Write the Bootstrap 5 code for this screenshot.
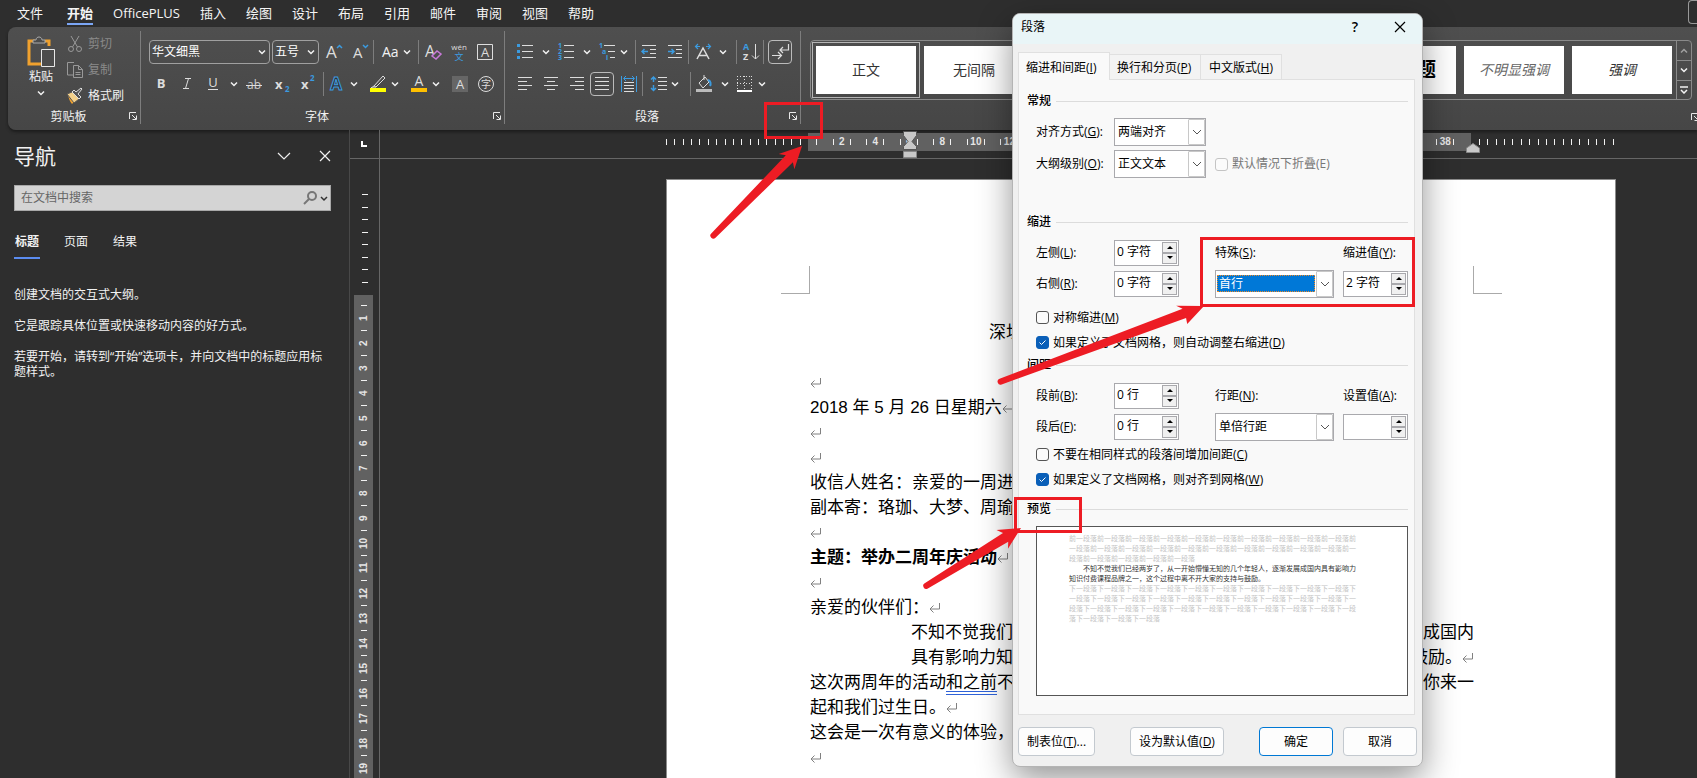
<!DOCTYPE html>
<html lang="zh-CN">
<head>
<meta charset="utf-8">
<meta name="viewport" content="width=device-width, initial-scale=1">
<title>段落设置</title>
<link href="https://cdn.jsdelivr.net/npm/bootstrap@5.3.0/dist/css/bootstrap.min.css" rel="stylesheet">
<style>
  :root { --dark:#2e2e2e; --line:#666; --blue:#3b9be0; }
  body { font-family:"Open Sans","Noto Sans CJK SC",sans-serif; font-size:12px; line-height:16px; background:var(--dark); color:#f2f2f2; }
  button { font-family:inherit; color:inherit; }
  svg { display:block; flex:none; }
  svg text { font-family:"Open Sans","Noto Sans CJK SC",sans-serif; }
  .bare { background:none; border:0; padding:0; }
  .app { height:100vh; }

  /* menu tabs */
  .menu-tabs { height:28px; gap:20px; padding-left:17px; font-size:13px; line-height:18px; }
  .menu-tabs a { color:#f5f5f5; text-decoration:none; padding:4px 0 1px; border-bottom:2px solid transparent; white-space:nowrap; }
  .menu-tabs a:first-child { margin-right:4px; }
  .menu-tabs a.active { font-weight:700; border-color:#7ba6f5; }
  .edge-btn { width:9px; height:24px; border:1px solid #999; border-right:0; border-radius:4px 0 0 4px; }

  /* ribbon */
  .ribbon { margin-left:8px; height:103px; background:linear-gradient(#4f4f4f,#464646); border-radius:8px 0 0 8px; box-shadow:0 2px 3px #1c1c1c; flex:none; }
  .grp { padding-top:13px; position:relative; }
  .grp.ruled { border-right:1px solid transparent; border-image:linear-gradient(transparent 5px,#7d7d7d 5px,#7d7d7d 96px,transparent 96px) 1; }
  .grp-clip { width:133px; padding-top:4px; }
  .grp-font { width:364px; }
  .grp-para { width:296px; }
  .grp-foot { height:20px; margin-bottom:1px; }
  .launcher { width:8px; height:8px; margin-right:3px; margin-top:3px; }
  .tools { height:24px; margin-bottom:8px; padding-left:7px; }
  .tools > * { flex:none; }
  .tool { width:26px; height:24px; }
  .tool.wide { width:41px; }
  .tool.aa { width:43px; }
  .tool.case { width:44px; font-size:14px; }
  .tool.on svg { outline:1px solid #bbb; outline-offset:-1px; border-radius:4px; }
  .vr-line { width:1px; height:24px; background:#7d7d7d; }
  .dark-select { height:24px; border:1px solid #a0a0a0; border-radius:4px; padding-right:3px; margin-right:2px; }
  .dark-select select { appearance:none; background:none; border:0; color:#fff; font:inherit; padding:0 0 0 2px; min-width:0; }
  .clip-row { height:26px; gap:4px; }
  .faded { color:#8a8a8a; }
  .gallery { border:1px solid #8a8a8a; border-radius:4px; height:60px; margin-right:5px; }
  .tile-frame { border:1px solid transparent; padding:3px; margin:1px 0 0 1px; width:108px; height:56px; }
  .tile-frame + .tile-frame { margin-left:0; }
  .tile-frame.active { border-color:#b5b5b5; }
  .tile { background:#fff; color:#333; width:100px; height:48px; font-size:14px; }
  .gal-scroll { width:15px; border-left:1px solid #8a8a8a; }
  .gal-scroll button + button { border-top:1px solid #8a8a8a; }

  /* navigation pane */
  .nav-pane { width:350px; border-right:1px solid #484848; padding:14px 18px 0 14px; flex:none; }
  .nav-pane h1 { font-size:21px; line-height:24px; font-weight:400; margin:0; }
  .search { height:26px; background:#d4d4d4; border:1px solid #a8a8a8; margin-top:17px; padding-left:6px; }
  .search input { background:none; border:0; outline:0; font-size:12px; padding:0; color:#444; }
  .search input::placeholder { color:#666; opacity:1; }
  .pane-tabs { gap:23px; margin-top:23px; }
  .pane-tabs a { color:#f2f2f2; text-decoration:none; padding:0 1px 7px; border-bottom:2px solid transparent; }
  .pane-tabs a.active { font-weight:700; border-color:#5b8cf0; }
  .pane-text { margin-top:28px; line-height:15px; }
  .pane-text p { margin:0 0 16px; }

  /* rulers */
  .v-ruler { width:30px; border-right:1px solid var(--line); flex:none; }
  .corner { height:29px; border-bottom:1px solid var(--line); padding:11px 0 0 11px; }
  .v-out { height:25px; }
  .v-out i, .v-cell i { width:6px; height:1px; background:#f2f2f2; }
  .v-outs { padding-top:29px; }
  .v-band { background:#616161; width:19px; margin:7px auto 0 4px; padding-top:10px; }
  .v-cell { height:25px; }
  .v-cell b { writing-mode:vertical-rl; transform:rotate(180deg); height:24px; text-align:center; font-size:10px; line-height:12px; color:#e6e6e6; font-family:"Liberation Sans",sans-serif; }
  .h-ruler { height:29px; border-bottom:1px solid var(--line); padding:3px 0 0 286px; }
  .h-ruler > div { height:18px; flex:none; }
  .h-out { width:142px; }
  .h-out i, .h-num i, .h-first i { width:1px; height:6px; background:#f2f2f2; display:block; }
  .h-out span { flex:1 1 0; }
  .h-band { width:663px; background:#616161; position:relative; padding-right:9px; }
  .h-first { width:17px; padding-left:8px; }
  .h-num { flex:1 1 0; min-width:0; }
  .h-num div { width:18px; font:700 10px/12px "Liberation Sans",sans-serif; color:#e6e6e6; }
  .mark-left { position:absolute; left:95px; top:-2px; }
  .mark-right { position:absolute; right:-9px; top:10px; }

  /* document */
  .doc-area { padding:20px 0 0 286px; overflow:hidden; }
  .sheet { width:950px; height:100%; background:#fff; border:1px solid #8c8c8c; border-bottom:0; color:#000; padding:86px 113px 0 114px; font:17px/25px "Liberation Sans","Noto Sans CJK SC",sans-serif; flex:none; }
  .crop { width:29px; height:28px; border-bottom:1px solid #aaa; }
  .crop.l { border-right:1px solid #aaa; }
  .crop.r { border-left:1px solid #aaa; }
  .letter { padding:26px 28px 0 29px; }
  .ln { height:25px; white-space:nowrap; display:flex; align-items:center; }
  .ln.ind { padding-left:101px; }
  .gram { text-decoration:underline double #2f62d8; text-underline-offset:3px; }

  /* dialog */
  .dlg { position:absolute; left:1012px; top:13px; width:411px; height:754px; background:#f0f0f0; color:#000; border:1px solid #b4b4b4; border-radius:8px; box-shadow:0 12px 34px rgba(0,0,0,.42); overflow:hidden; padding:0; }
  .dlg-head { height:30px; background:#e9f5f7; padding:0 16px 4px 8px; }
  .dlg-tabs { padding:8px 0 0 5px; }
  .dlg-tabs button { height:25px; background:#f3f3f3; border:1px solid #e0e0e0; border-left:0; border-bottom:0; padding:2px 7px 0; width:91px; white-space:nowrap; text-align:left; }
  .dlg-tabs button.active { height:28px; width:92px; background:#f9f9f9; border-left:1px solid #e0e0e0; position:relative; margin-bottom:-1px; }
  .dlg-tabs button:last-child { width:81px; padding-left:8px; }
  .panel { background:#f9f9f9; border:1px solid #e0e0e0; margin:0 7px 0 5px; height:636px; padding:13px 6px 0 8px; }
  .sect { height:16px; margin:0 0 7px; font-size:12px; line-height:16px; gap:5px; }
  .sect::after { content:""; flex:1; height:1px; background:#dcdcdc; }
  .sect span { white-space:nowrap; }
  .rows { margin-left:9px; }
  .f-row { display:grid; grid-template-columns:78px 101px 1fr 65px; align-items:center; height:31px; }
  .f-row.gen { grid-template-columns:78px 101px 1fr; height:32px; }
  .c-row { height:25px; gap:4px; }
  .c-row.gray { color:#777; height:32px; }
  .c-row input { appearance:none; width:13px; height:13px; border:1px solid #555; border-radius:3px; margin:0; background:#fbfbfb; flex:none; }
  .c-row input:disabled { border-color:#c4c4c4; }
  .c-row input:checked { border-color:#0a5fb8; background:#0a5fb8 url("data:image/svg+xml,%3Csvg xmlns='http://www.w3.org/2000/svg' viewBox='0 0 11 11'%3E%3Cpath d='M2.5 5.5l2 2 4-4' fill='none' stroke='white'/%3E%3C/svg%3E"); }
  .pick { height:28px; width:92px; border:1px solid #a9a9ad; background:#fff; padding-left:1px; }
  .pick.long { width:119px; }
  .pick select { appearance:none; border:1px solid transparent; background:none; color:#000; font:inherit; line-height:14px; height:17px; padding:0 1px; min-width:0; flex:1; border-radius:0; }
  .pick.focus select { background:#0078d7; color:#fff; border:1px dotted #f08a24; }
  .pick .drop { width:17px; height:26px; border:1px solid #c8c8c8; border-radius:1px; margin-left:1px; }
  .spin { height:26px; width:65px; border:1px solid #a9a9ad; background:#fff; padding:1px; }
  .spin input { border:0; outline:0; background:none; font-size:12px; padding:0 0 2px 1px; min-width:0; flex:1; color:#000; }
  .spin button { width:15px; height:11px; border:1px solid #a9a9ad; background:#f0f0f0; padding:0; }
  .preview { background:#fff; border:1px solid #555; height:170px; margin-top:9px; padding:7px 0 0 32px; color:#c4c4c4; font-size:7px; line-height:10px; }
  .preview p { width:289px; margin:0; word-break:break-all; }
  .preview p.cur { color:#333; text-indent:14px; }
  .dlg-foot { padding:12px 0 0 5px; }
  .dlg-foot button { height:29px; background:#fdfdfd; border:1px solid #c3c9cf; border-radius:4px; padding:0; flex:none; }
  .w-s { width:74px; } .w-m { width:77px; } .w-l { width:94px; margin:0 35px; }
  .dlg-foot button.ok { border-color:#0078d4; margin-right:10px; }

  .notes { position:absolute; left:0; top:0; pointer-events:none; }
</style>
</head>
<body class="overflow-hidden">
<svg width="0" height="0" class="position-absolute" aria-hidden="true">
  <symbol id="cv" viewBox="0 0 8 8"><path d="M1 2.5l3 3 3-3" fill="none" stroke="#f2f2f2" stroke-width="1.5"/></symbol>
  <symbol id="dcv" viewBox="0 0 10 10"><path d="M1 3l4 4 4-4" fill="none" stroke="#555"/></symbol>
  <symbol id="lch" viewBox="0 0 8 8"><path d="M.5 7V.5H7M3 3l4 4M7.5 3.5v4h-4" fill="none" stroke="#e8e8e8"/></symbol>
  <symbol id="ret" viewBox="0 0 12 12"><path d="M10.500 1v6H1.500M4.500 3.500L1 7l3.500 3.500" fill="none" stroke="#808080"/></symbol>
  <symbol id="up" viewBox="0 0 6 4"><path d="M0 4L3 1l3 3z"/></symbol>
  <symbol id="dn" viewBox="0 0 6 4"><path d="M0 0l3 3 3-3z"/></symbol>
  <symbol id="x" viewBox="0 0 12 12"><path d="M1 1l10 10M11 1L1 11" fill="none" stroke="currentColor" stroke-width="1.200"/></symbol>
</svg>

<div class="app d-flex flex-column">
  <nav class="menu-tabs d-flex align-items-start">
    <a href="#">文件</a><a href="#" class="active">开始</a><a href="#">OfficePLUS</a><a href="#">插入</a><a href="#">绘图</a><a href="#">设计</a><a href="#">布局</a><a href="#">引用</a><a href="#">邮件</a><a href="#">审阅</a><a href="#">视图</a><a href="#">帮助</a>
    <button class="bare edge-btn ms-auto mt-0" aria-label="更多"></button>
  </nav>

  <div class="ribbon d-flex">
    <section class="grp grp-clip ruled d-flex flex-column flex-shrink-0">
      <div class="d-flex">
        <button class="bare d-flex flex-column align-items-center ms-2" style="width:50px">
          <svg class="mt-1" width="30" height="34" viewBox="0 0 30 34"><path d="M9 6H3v23h12M19 6h4v5" fill="none" stroke="#f0a12e" stroke-width="3"/><path d="M7 8V5h3c0-4 6-4 6 0h3v3z" fill="#4c4c4c" stroke="#aaa"/><path d="M15.500 14.500h13v17h-13z" fill="#4c4c4c" stroke="#e8e8e8"/></svg>
          <span>粘贴</span>
          <svg class="mt-1" width="8" height="8"><use href="#cv"/></svg>
        </button>
        <div>
          <button class="bare clip-row d-flex align-items-center faded"><svg width="18" height="18" viewBox="0 0 18 18" fill="none" stroke="#999"><path d="M5 1l6.500 11M13 1L6.500 12"/><circle cx="5" cy="14" r="2.500"/><circle cx="13" cy="14" r="2.500"/></svg>剪切</button>
          <button class="bare clip-row d-flex align-items-center faded"><svg width="18" height="18" viewBox="0 0 18 18" fill="none" stroke="#999"><path d="M7 14H1.500V1.500H8"/><path d="M7.500 4.500h5l4 4v8h-9zM12.500 4.500v4h4M9.500 11.500h5M9.500 13.500h5"/></svg>复制</button>
          <button class="bare clip-row d-flex align-items-center"><svg width="18" height="18" viewBox="0 0 18 18"><path d="M2 8l7 6-3 3C4 15 3 12 2 8z" fill="#f0a12e"/><path d="M1 7l5-2 7 7-5 4z" fill="#f3d08a" stroke="#555"/><path d="M6 5l7 7 2-2-3-3 4-5-1-1-5 4-2-2z" fill="#555" stroke="#ddd"/></svg>格式刷</button>
        </div>
      </div>
      <div class="grp-foot d-flex mt-auto"><span class="flex-fill text-center">剪贴板</span><button class="bare launcher" aria-label="剪贴板选项"><svg width="8" height="8"><use href="#lch"/></svg></button></div>
    </section>

    <section class="grp grp-font ruled d-flex flex-column flex-shrink-0">
      <div class="tools d-flex align-items-center ps-2">
        <div class="dark-select d-flex align-items-center" style="width:121px"><select class="flex-fill" aria-label="字体"><option>华文细黑</option></select><svg width="8" height="8"><use href="#cv"/></svg></div>
        <div class="dark-select d-flex align-items-center" style="width:47px"><select class="flex-fill" aria-label="字号"><option>五号</option></select><svg width="8" height="8"><use href="#cv"/></svg></div>
        <button class="bare tool"><svg width="26" height="24"><text x="5" y="18" font-size="17" fill="#ddd">A</text><path d="M16 8l2.500-2.500L21 8" fill="none" stroke="#3b9be0" stroke-width="1.500"/></svg></button>
        <button class="bare tool"><svg width="26" height="24"><text x="6" y="18" font-size="15" fill="#ddd">A</text><path d="M16 5l2.500 2.500L21 5" fill="none" stroke="#3b9be0" stroke-width="1.500"/></svg></button>
        <span class="vr-line"></span>
        <button class="bare tool case d-flex align-items-center gap-1 ps-2">Aa<svg width="8" height="8"><use href="#cv"/></svg></button>
        <span class="vr-line"></span>
        <button class="bare tool"><svg width="26" height="24"><text x="6" y="17" font-size="16" fill="#ddd">A</text><path d="M13 16l5-5 4 3-5 5z" fill="#4c4c4c" stroke="#c879d8" stroke-width="1.500"/></svg></button>
        <button class="bare tool"><svg width="26" height="24"><text x="14" y="10" font-size="8" fill="#ddd" text-anchor="middle">wén</text><text x="14" y="20" font-size="9" fill="#3b9be0" text-anchor="middle">文</text></svg></button>
        <button class="bare tool"><svg width="26" height="24"><path d="M6.500 4.500h15v15h-15z" fill="none" stroke="#ddd"/><text x="14" y="17" font-size="13" fill="#ddd" text-anchor="middle">A</text></svg></button>
      </div>
      <div class="tools d-flex align-items-center">
        <button class="bare tool"><svg width="26" height="24"><text x="13" y="16" font-size="13" font-weight="700" fill="#ddd" text-anchor="middle">B</text></svg></button>
        <button class="bare tool"><svg width="26" height="24"><path d="M11 6.500h6M9 16.500h6M14.500 6.500l-3 10" fill="none" stroke="#ddd"/></svg></button>
        <button class="bare tool wide d-flex align-items-center"><svg width="26" height="24"><text x="13" y="15" font-size="13" fill="#ddd" text-anchor="middle">U</text><path d="M8 17.500h10" stroke="#ddd"/></svg><svg width="8" height="8" class="ms-1"><use href="#cv"/></svg></button>
        <button class="bare tool me-1"><svg width="26" height="24"><text x="13" y="17" font-size="12" fill="#ccc" text-anchor="middle">ab</text><path d="M5 13.500h16" stroke="#ddd"/></svg></button>
        <button class="bare tool"><svg width="26" height="24"><text x="4" y="17" font-size="13" font-weight="700" fill="#ddd">x</text><text x="14" y="20" font-size="8" font-weight="700" fill="#3b9be0">2</text></svg></button>
        <button class="bare tool"><svg width="26" height="24"><text x="4" y="17" font-size="13" font-weight="700" fill="#ddd">x</text><text x="13" y="9" font-size="8" font-weight="700" fill="#3b9be0">2</text></svg></button>
        <span class="vr-line"></span>
        <button class="bare tool wide d-flex align-items-center"><svg width="26" height="24"><text x="12" y="18" font-size="17" font-weight="700" fill="#333" stroke="#3b9be0" text-anchor="middle">A</text></svg><svg width="8" height="8"><use href="#cv"/></svg></button>
        <button class="bare tool wide d-flex align-items-center"><svg width="26" height="24"><path d="M9 14l9-10 2 2-9 9zM9 14l-3 2h5" fill="none" stroke="#ddd"/><path d="M5 16h16v4H5z" fill="#ff0"/></svg><svg width="8" height="8"><use href="#cv"/></svg></button>
        <button class="bare tool wide d-flex align-items-center"><svg width="26" height="24"><text x="13" y="14" font-size="14" fill="#ddd" text-anchor="middle">A</text><path d="M5 16h16v4H5z" fill="#ffc000"/></svg><svg width="8" height="8"><use href="#cv"/></svg></button>
        <button class="bare tool"><svg width="26" height="24"><path d="M5 4h16v16H5z" fill="#666"/><text x="13" y="17" font-size="13" fill="#ddd" text-anchor="middle">A</text></svg></button>
        <button class="bare tool"><svg width="26" height="24"><circle cx="13" cy="12" r="7.500" fill="none" stroke="#ddd"/><text x="13" y="16" font-size="10" fill="#ddd" text-anchor="middle">字</text></svg></button>
      </div>
      <div class="grp-foot d-flex mt-auto"><span class="flex-fill text-center">字体</span><button class="bare launcher" aria-label="字体选项"><svg width="8" height="8"><use href="#lch"/></svg></button></div>
    </section>

    <section class="grp grp-para ruled d-flex flex-column flex-shrink-0">
      <div class="tools d-flex align-items-center">
        <button class="bare tool wide d-flex align-items-center"><svg width="26" height="24"><path d="M5 4h3v3H5zM5 10h3v3H5zM5 16h3v3H5z" fill="#3b9be0"/><path d="M10 5.500h11M10 11.500h11M10 17.500h11" stroke="#ddd"/></svg><svg width="8" height="8" class="ms-1"><use href="#cv"/></svg></button>
        <button class="bare tool wide d-flex align-items-center"><svg width="26" height="24"><g font-size="7" font-weight="700" fill="#3b9be0"><text x="5" y="8">1</text><text x="5" y="14">2</text><text x="5" y="20">3</text></g><path d="M11 5.500h10M11 11.500h10M11 17.500h10" stroke="#ddd"/></svg><svg width="8" height="8" class="ms-1"><use href="#cv"/></svg></button>
        <button class="bare tool wide d-flex align-items-center"><svg width="26" height="24"><g font-size="7" font-weight="700" fill="#3b9be0"><text x="5" y="8">1</text><text x="8" y="14">a</text><text x="12" y="20">i</text></g><path d="M10 5.500h11M14 11.500h7M16 17.500h5" stroke="#ddd"/></svg><svg width="8" height="8"><use href="#cv"/></svg></button>
        <span class="vr-line"></span>
        <button class="bare tool"><svg width="26" height="24"><path d="M6 5.500h14M14 9.500h6M14 13.500h6M6 17.500h14" stroke="#ddd"/><path d="M12 11.500H6M8.500 9L6 11.500 8.500 14" fill="none" stroke="#3b9be0" stroke-width="1.500"/></svg></button>
        <button class="bare tool"><svg width="26" height="24"><path d="M6 5.500h14M14 9.500h6M14 13.500h6M6 17.500h14" stroke="#ddd"/><path d="M6 11.500h6M9.500 9l2.500 2.500L9.500 14" fill="none" stroke="#3b9be0" stroke-width="1.500"/></svg></button>
        <span class="vr-line"></span>
        <button class="bare tool aa d-flex align-items-center"><svg width="26" height="24"><path d="M8 19l6-11 6 11M10 15.500h8" fill="none" stroke="#ddd" stroke-width="1.500"/><path d="M11 6.500H7M9 4L6.500 6.500 9 9M17 6.500h4M19 4l2.500 2.500L19 9" fill="none" stroke="#3b9be0" stroke-width="1.200"/></svg><svg width="8" height="8" class="ms-1"><use href="#cv"/></svg></button>
        <span class="vr-line ms-1"></span>
        <button class="bare tool"><svg width="26" height="24"><g font-size="9" font-weight="700"><text x="6" y="10" fill="#3b9be0">A</text><text x="6" y="20" fill="#ddd">Z</text></g><path d="M18.500 4v15M15 15.500l3.500 3.500 3.500-3.500" fill="none" stroke="#ddd"/></svg></button>
        <span class="vr-line me-1"></span>
        <button class="bare tool on"><svg width="24" height="24"><path d="M20.500 4v6H12M15 7l-3 3 3 3M4 15.500h9M10 12l3.500 3.500L10 19" fill="none" stroke="#ddd" stroke-width="1.200"/></svg></button>
      </div>
      <div class="tools d-flex align-items-center">
        <button class="bare tool"><svg width="26" height="24"><path d="M6 5.500h14M6 9.500h9M6 13.500h14M6 17.500h9" stroke="#ddd"/></svg></button>
        <button class="bare tool"><svg width="26" height="24"><path d="M6 5.500h14M9 9.500h8M6 13.500h14M9 17.500h8" stroke="#ddd"/></svg></button>
        <button class="bare tool"><svg width="26" height="24"><path d="M6 5.500h14M11 9.500h9M6 13.500h14M11 17.500h9" stroke="#ddd"/></svg></button>
        <button class="bare tool on"><svg width="24" height="24"><path d="M5 5.500h14M5 9.500h14M5 13.500h14M5 17.500h14" stroke="#ddd"/></svg></button>
        <button class="bare tool"><svg width="26" height="24"><path d="M8 10.500h10M8 13.500h10M8 16.500h10M8 19.500h10" stroke="#ddd"/><path d="M5.500 4v16M20.500 4v16M8 6.500h10M10 4L7.500 6.500 10 9M16 4l2.500 2.500L16 9" fill="none" stroke="#3b9be0"/></svg></button>
        <span class="vr-line"></span>
        <button class="bare tool aa d-flex align-items-center ms-1"><svg width="24" height="24"><path d="M11 5.500h9M11 9.500h9M11 13.500h9M11 17.500h9" stroke="#ddd"/><path d="M6.500 5v5M4 7.500L6.500 5 9 7.500M6.500 13v6M4 16l2.500 2.500L9 16" fill="none" stroke="#3b9be0" stroke-width="1.500"/></svg><svg width="8" height="8"><use href="#cv"/></svg></button>
        <span class="vr-line"></span>
        <button class="bare tool wide d-flex align-items-center"><svg width="26" height="24"><path d="M8 11l6-6 4 5-6 6zM13 3v5" fill="none" stroke="#ddd"/><path d="M17 8c3 1 3 4 2 6" fill="none" stroke="#3b9be0" stroke-width="2"/><path d="M5 17h16v3H5z" fill="#bbb"/></svg><svg width="8" height="8" class="ms-1"><use href="#cv"/></svg></button>
        <button class="bare tool wide d-flex align-items-center"><svg width="26" height="24"><path d="M5.500 4v14M12.500 4v14M19.500 4v14M5 4.500h15M5 11.500h15" stroke="#ddd" stroke-dasharray="1 2"/><path d="M5 19h15" stroke="#fff" stroke-width="2"/></svg><svg width="8" height="8"><use href="#cv"/></svg></button>
      </div>
      <div class="grp-foot d-flex mt-auto"><span class="flex-fill text-center">段落</span><button class="bare launcher" aria-label="段落设置"><svg width="8" height="8"><use href="#lch"/></svg></button></div>
    </section>

    <section class="grp d-flex flex-column flex-fill overflow-hidden" style="padding-left:9px">
      <div class="gallery d-flex">
        <div class="d-flex flex-fill overflow-hidden">
          <div class="tile-frame active flex-shrink-0"><button class="bare tile">正文</button></div>
          <div class="tile-frame flex-shrink-0"><button class="bare tile">无间隔</button></div>
          <div class="tile-frame flex-shrink-0"><button class="bare tile">标题 1</button></div>
          <div class="tile-frame flex-shrink-0"><button class="bare tile">标题 2</button></div>
          <div class="tile-frame flex-shrink-0"><button class="bare tile">标题</button></div>
          <div class="tile-frame flex-shrink-0"><button class="bare tile fw-bold text-black" style="font-size:20px">副标题</button></div>
          <div class="tile-frame flex-shrink-0"><button class="bare tile fst-italic" style="color:#666">不明显强调</button></div>
          <div class="tile-frame flex-shrink-0"><button class="bare tile fst-italic">强调</button></div>
        </div>
        <div class="gal-scroll d-flex flex-column">
          <button class="bare flex-fill d-flex align-items-center justify-content-center opacity-50" aria-label="上移"><svg width="8" height="8" style="rotate:180deg"><use href="#cv"/></svg></button>
          <button class="bare flex-fill d-flex align-items-center justify-content-center" aria-label="下移"><svg width="8" height="8"><use href="#cv"/></svg></button>
          <button class="bare flex-fill d-flex align-items-center justify-content-center" aria-label="其他"><svg width="8" height="8" viewBox="0 0 8 8"><path d="M0 1h8M1 4l3 3 3-3" fill="none" stroke="#f2f2f2" stroke-width="1.500"/></svg></button>
        </div>
      </div>
      <div class="grp-foot d-flex mt-auto"><span class="flex-fill text-center">样式</span><button class="bare overflow-hidden mt-1" style="width:6px;height:8px" aria-label="样式选项"><svg width="8" height="8"><use href="#lch"/></svg></button></div>
    </section>
  </div>

  <div class="d-flex flex-fill overflow-hidden">
    <aside class="nav-pane">
      <div class="d-flex align-items-center">
        <h1 class="flex-fill">导航</h1>
        <button class="bare me-4" aria-label="选项"><svg width="14" height="14" viewBox="0 0 14 14"><path d="M1 4l6 6 6-6" fill="none" stroke="#eee" stroke-width="1.200"/></svg></button>
        <button class="bare ps-1" aria-label="关闭"><svg width="12" height="12"><use href="#x"/></svg></button>
      </div>
      <div class="search d-flex align-items-center">
        <input class="flex-fill" type="text" placeholder="在文档中搜索" aria-label="在文档中搜索">
        <svg width="16" height="16" viewBox="0 0 16 16" fill="none" stroke="#777" stroke-width="2"><circle cx="10" cy="6" r="4"/><path d="M7 9l-5 5"/></svg>
        <svg width="12" height="12" viewBox="0 0 12 12"><path d="M3 5l3 3 3-3" fill="none" stroke="#333" stroke-width="1.500"/></svg>
      </div>
      <nav class="pane-tabs d-flex"><a href="#" class="active">标题</a><a href="#">页面</a><a href="#">结果</a></nav>
      <div class="pane-text"><p>创建文档的交互式大纲。</p><p>它是跟踪具体位置或快速移动内容的好方式。</p><p>若要开始，请转到“开始”选项卡，并向文档中的标题应用标题样式。</p></div>
    </aside>

    <div class="v-ruler overflow-hidden">
      <div class="corner"><svg width="6" height="6"><path d="M1 0v5h5" fill="none" stroke="#fff" stroke-width="2"/></svg></div>
      <div class="v-outs" id="vOut"></div>
      <div class="v-band" id="vBand"></div>
    </div>

    <main class="flex-fill d-flex flex-column overflow-hidden">
      <div class="h-ruler d-flex flex-shrink-0">
        <div class="h-out d-flex align-items-center" data-ticks="17"></div>
        <div class="h-band d-flex align-items-center" id="hBand">
          <span class="h-first"><i></i></span>
          <svg class="mark-left" width="14" height="28" viewBox="0 0 14 28"><path d="M.5.500h13v4L9 10.500l4.500 5v3H.5v-3l4.500-5-4.500-6z" fill="#c8c8c8" stroke="#555"/><path d="M.5 20.500h13v6H.5z" fill="#c8c8c8" stroke="#888"/></svg>
          <svg class="mark-right" width="14" height="10" viewBox="0 0 14 10"><path d="M.5 9.500V5L7 .5 13.500 5v4.500z" fill="#c8c8c8" stroke="#888"/></svg>
        </div>
        <div class="h-out d-flex align-items-center ms-2" data-ticks="17"></div>
      </div>
      <div class="doc-area flex-fill">
        <article class="sheet overflow-hidden">
          <div class="d-flex justify-content-between"><span class="crop l"></span><span class="crop r"></span></div>
          <div class="letter">
            <div class="ln justify-content-center">深圳一周进步有限公司周年庆活动邀请函</div>
            <div class="ln"></div>
            <div class="ln"><svg width="12" height="12"><use href="#ret"/></svg></div>
            <div class="ln">2018 年 5 月 26 日星期六<svg width="12" height="12"><use href="#ret"/></svg></div>
            <div class="ln"><svg width="12" height="12"><use href="#ret"/></svg></div>
            <div class="ln"><svg width="12" height="12"><use href="#ret"/></svg></div>
            <div class="ln">收信人姓名：亲爱的一周进步</div>
            <div class="ln">副本寄：珞珈、大梦、周瑜</div>
            <div class="ln"><svg width="12" height="12"><use href="#ret"/></svg></div>
            <div class="ln fw-bold">主题：举办二周年庆活动<svg width="12" height="12"><use href="#ret"/></svg></div>
            <div class="ln"><svg width="12" height="12"><use href="#ret"/></svg></div>
            <div class="ln">亲爱的伙伴们：<svg width="12" height="12"><use href="#ret"/></svg></div>
            <div class="ln ind justify-content-between"><span>不知不觉我们已经两岁了，从一开始</span><span>逐渐发展成国内</span></div>
            <div class="ln ind justify-content-between"><span>具有影响力知识付费课程品牌之一，</span><span class="d-flex align-items-center">大家的支持与鼓励。<svg width="12" height="12"><use href="#ret"/></svg></span></div>
            <div class="ln justify-content-between"><span>这次两周年的活动<span class="gram">和之前</span>不一样</span><span>你来一</span></div>
            <div class="ln">起和我们过生日。<svg width="12" height="12"><use href="#ret"/></svg></div>
            <div class="ln">这会是一次有意义的体验，</div>
            <div class="ln"><svg width="12" height="12"><use href="#ret"/></svg></div>
            <div class="ln"><svg width="12" height="12"><use href="#ret"/></svg></div>
          </div>
        </article>
      </div>
    </main>
  </div>
</div>

<form class="dlg" role="dialog" aria-label="段落" onsubmit="return false">
  <div class="dlg-head d-flex align-items-center">
    <span class="flex-fill">段落</span>
    <button type="button" class="bare fw-semibold me-3 pe-3 text-center" style="font-size:14px" aria-label="帮助">?</button>
    <button type="button" class="bare ps-1" aria-label="关闭"><svg width="12" height="12"><use href="#x"/></svg></button>
  </div>
  <div class="dlg-tabs d-flex align-items-end">
    <button type="button" class="active">缩进和间距(<u>I</u>)</button><button type="button">换行和分页(<u>P</u>)</button><button type="button">中文版式(<u>H</u>)</button>
  </div>
  <div class="panel">
    <h2 class="sect d-flex align-items-center"><span>常规</span></h2>
    <div class="rows">
      <div class="f-row gen"><label for="al">对齐方式(<u>G</u>):</label><div class="pick d-flex align-items-center"><select id="al"><option>两端对齐</option></select><span class="drop d-flex align-items-center justify-content-center"><svg width="10" height="10"><use href="#dcv"/></svg></span></div></div>
      <div class="f-row gen"><label for="ol">大纲级别(<u>O</u>):</label><div class="pick d-flex align-items-center"><select id="ol"><option>正文文本</option></select><span class="drop d-flex align-items-center justify-content-center"><svg width="10" height="10"><use href="#dcv"/></svg></span></div><div class="c-row gray d-flex align-items-center"><input type="checkbox" id="fold" disabled><label for="fold">默认情况下折叠(E)</label></div></div>
    </div>
    <h2 class="sect d-flex align-items-center" style="margin-top:34px"><span>缩进</span></h2>
    <div class="rows">
      <div class="f-row"><label for="il">左侧(<u>L</u>):</label><div class="spin d-flex align-items-center" data-spin><input id="il" type="text" value="0 字符"></div><label for="sp">特殊(<u>S</u>):</label><label for="iv" class="text-nowrap">缩进值(<u>Y</u>):</label></div>
      <div class="f-row"><label for="ir">右侧(<u>R</u>):</label><div class="spin d-flex align-items-center" data-spin><input id="ir" type="text" value="0 字符"></div><div class="pick long focus d-flex align-items-center"><select id="sp"><option>首行</option></select><span class="drop d-flex align-items-center justify-content-center"><svg width="10" height="10"><use href="#dcv"/></svg></span></div><div class="spin d-flex align-items-center" data-spin><input id="iv" type="text" value="2 字符"></div></div>
      <div class="c-row d-flex align-items-center" style="margin-top:6px"><input type="checkbox" id="c1"><label for="c1">对称缩进(<u>M</u>)</label></div>
      <div class="c-row d-flex align-items-center"><input type="checkbox" id="c2" checked><label for="c2">如果定义了文档网格，则自动调整右缩进(<u>D</u>)</label></div>
    </div>
    <h2 class="sect d-flex align-items-center" style="margin-top:2px"><span>间距</span></h2>
    <div class="rows">
      <div class="f-row"><label for="sb">段前(<u>B</u>):</label><div class="spin d-flex align-items-center" data-spin><input id="sb" type="text" value="0 行"></div><label for="ls">行距(<u>N</u>):</label><label for="sv" class="text-nowrap">设置值(<u>A</u>):</label></div>
      <div class="f-row"><label for="sa">段后(<u>F</u>):</label><div class="spin d-flex align-items-center" data-spin><input id="sa" type="text" value="0 行"></div><div class="pick long d-flex align-items-center"><select id="ls"><option>单倍行距</option></select><span class="drop d-flex align-items-center justify-content-center"><svg width="10" height="10"><use href="#dcv"/></svg></span></div><div class="spin d-flex align-items-center" data-spin><input id="sv" type="text" value=""></div></div>
      <div class="c-row d-flex align-items-center"><input type="checkbox" id="c3"><label for="c3">不要在相同样式的段落间增加间距(<u>C</u>)</label></div>
      <div class="c-row d-flex align-items-center"><input type="checkbox" id="c4" checked><label for="c4">如果定义了文档网格，则对齐到网格(<u>W</u>)</label></div>
    </div>
    <h2 class="sect d-flex align-items-center" style="margin-top:9px"><span>预览</span></h2>
    <div class="rows preview">
      <p data-repeat="25">前一段落</p>
      <p class="cur">不知不觉我们已经两岁了，从一开始懵懂无知的几个年轻人，逐渐发展成国内具有影响力知识付费课程品牌之一，这个过程中离不开大家的支持与鼓励。</p>
      <p data-repeat="34">下一段落</p>
    </div>
  </div>
  <div class="dlg-foot d-flex">
    <button type="button" class="w-m">制表位(<u>T</u>)...</button><button type="button" class="w-l">设为默认值(<u>D</u>)</button><button type="submit" class="w-s ok">确定</button><button type="button" class="w-s">取消</button>
  </div>
</form>

<svg class="notes" width="1424" height="600" viewBox="0 0 1424 600" aria-hidden="true">
  <g fill="none" stroke="#ed1c24" stroke-width="3"><path d="M765.500 103.500h56v34h-56zM1201.500 238.500h212v67h-212zM1015.500 498.500h65v33h-65z"/></g>
  <g fill="#ed1c24">
    <path transform="translate(802 146) rotate(-45.300)" d="M0 0L-22-11-18-5-126-3a3 3 0 0 0 0 6L-18 5-22 11z"/>
    <path transform="translate(1204 306) rotate(-20.400)" d="M0 0L-26-10-21-5-217-3a3 3 0 0 0 0 6L-21 5-22 11z"/>
    <path transform="translate(1021 528) rotate(-31.400)" d="M0 0L-22-11-18-5-111-3a3 3 0 0 0 0 6L-18 5-22 11z"/>
  </g>
</svg>

<script src="https://cdn.jsdelivr.net/npm/bootstrap@5.3.0/dist/js/bootstrap.bundle.min.js"></script>
<script>
  // ruler graduations
  const byId = id => document.getElementById(id);
  byId('vOut').innerHTML = '<div class="v-out d-flex flex-column align-items-center justify-content-around"><i></i><i></i></div>'.repeat(4);
  let v = '', h = '';
  for (let n = 1; n <= 19; n++) v += `<div class="v-cell d-flex flex-column align-items-center"><i></i><b>${n}</b></div>`;
  byId('vBand').innerHTML = v;
  for (let n = 2; n <= 38; n += 2) h += `<span class="h-num d-flex justify-content-center"><div class="d-flex align-items-center justify-content-between"><i></i>${n}<i></i></div></span>`;
  byId('hBand').insertAdjacentHTML('beforeend', h);
  document.querySelectorAll('[data-ticks]').forEach(e => e.innerHTML = '<span><i></i></span>'.repeat(+e.dataset.ticks));
  // repeated filler text of the preview
  document.querySelectorAll('[data-repeat]').forEach(e => e.textContent = e.textContent.repeat(+e.dataset.repeat));
  // spin buttons
  document.querySelectorAll('[data-spin]').forEach(e => e.insertAdjacentHTML('beforeend',
    '<div class="d-flex flex-column"><button type="button" class="d-flex align-items-center justify-content-center" aria-label="增加"><svg width="6" height="4"><use href="#up"/></svg></button><button type="button" class="d-flex align-items-center justify-content-center" aria-label="减少"><svg width="6" height="4"><use href="#dn"/></svg></button></div>'));
</script>
</body>
</html>
